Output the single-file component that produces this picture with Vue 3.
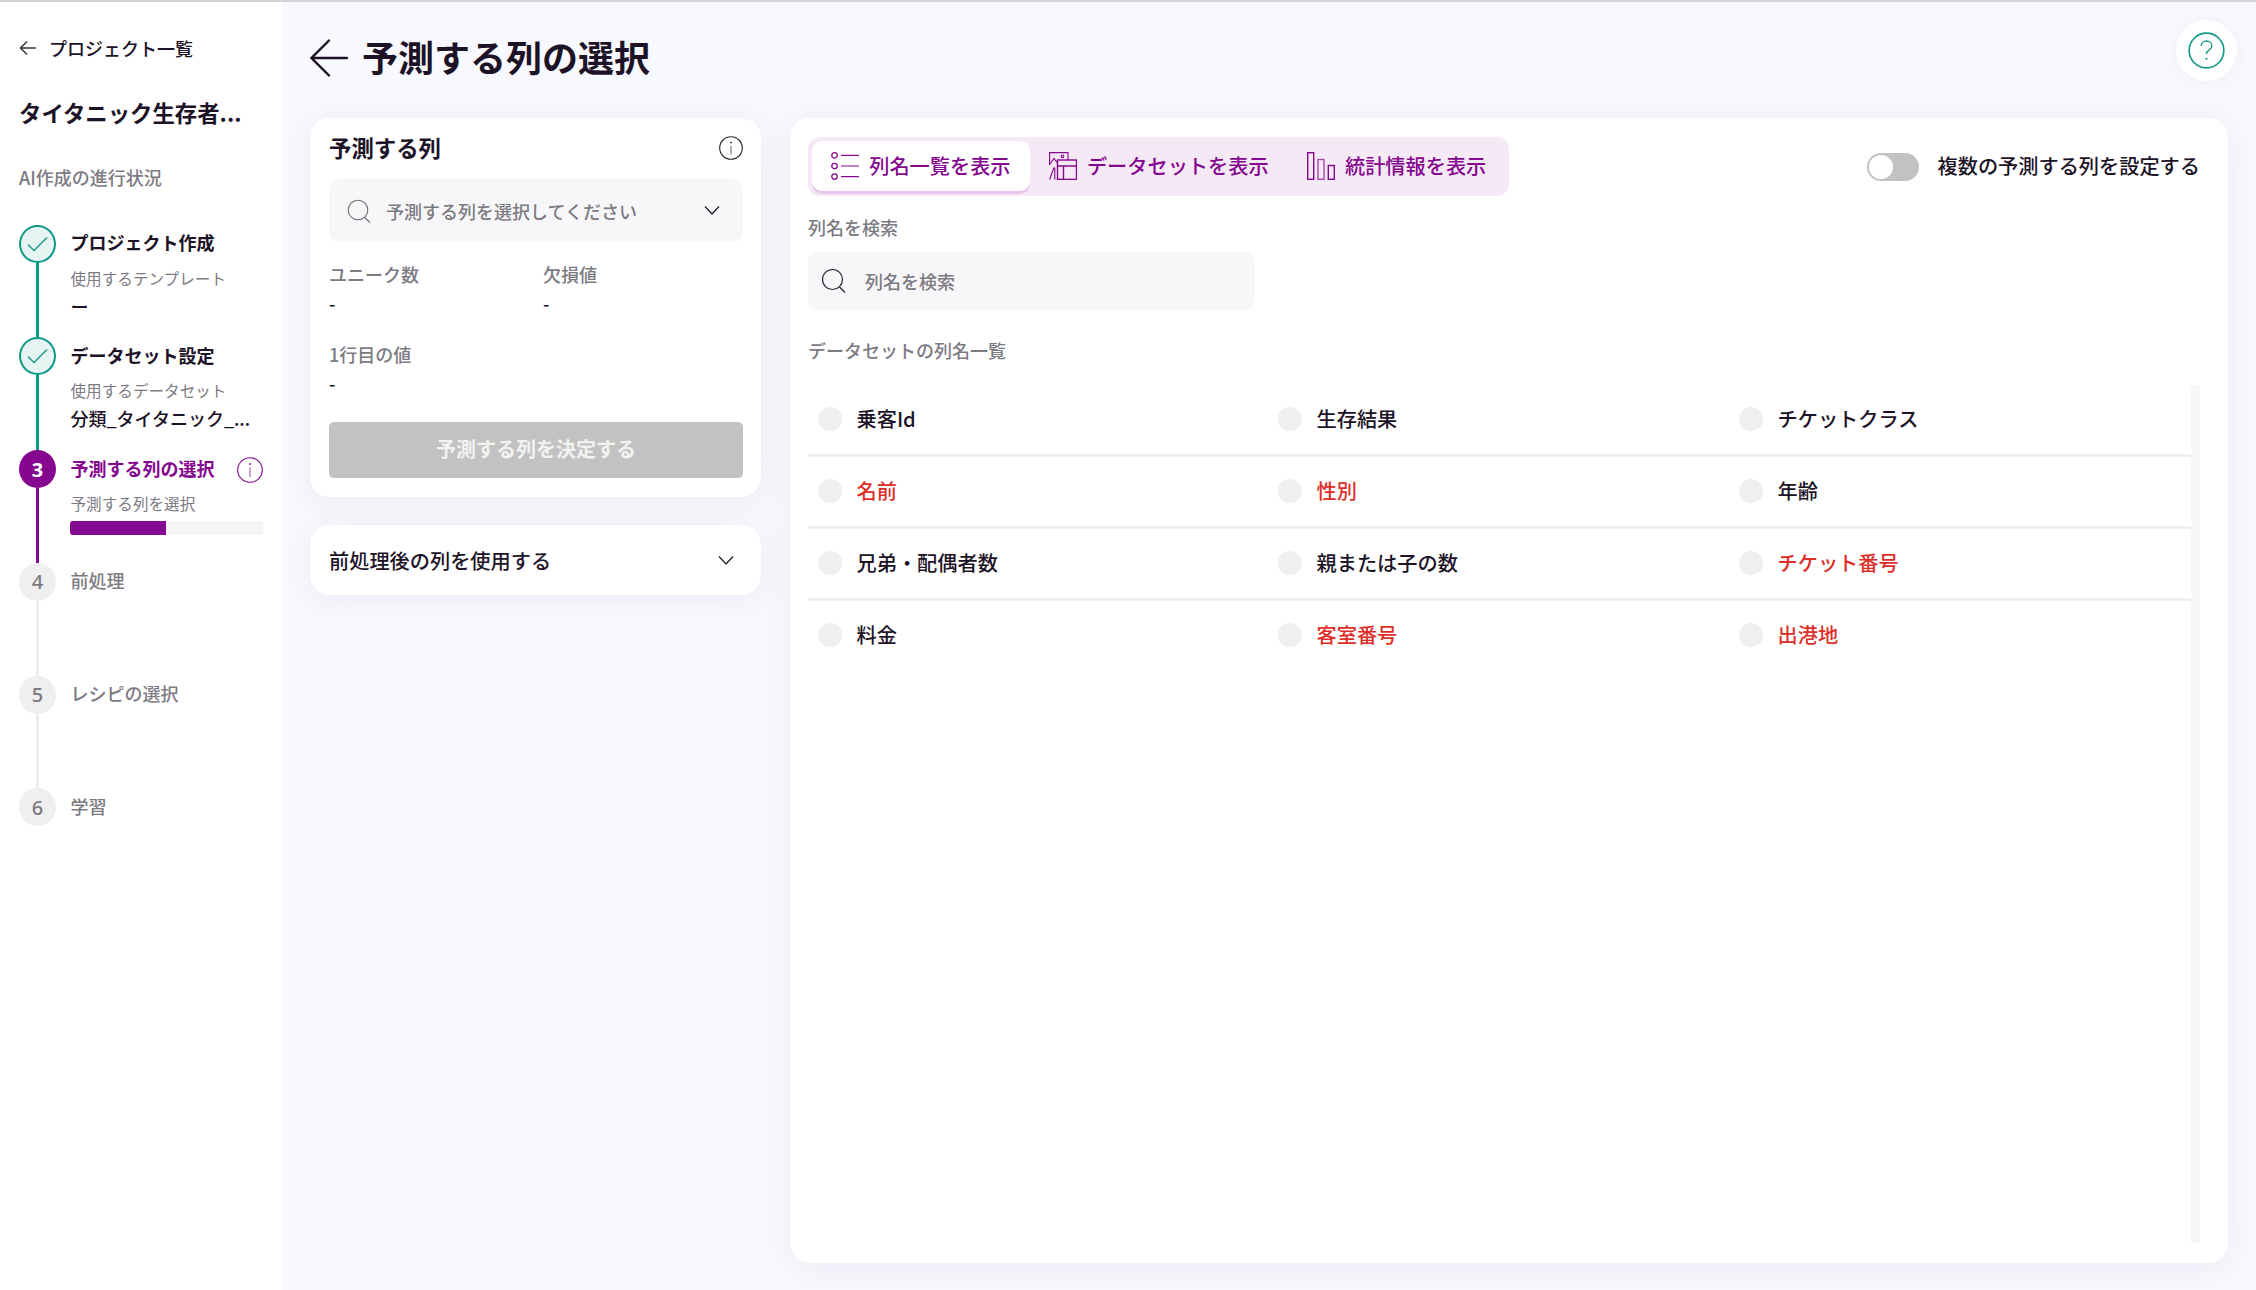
<script setup>
const steps = [
  { no: 1, state: 'done', name: 'プロジェクト作成', sub: '使用するテンプレート', value: 'ー' },
  { no: 2, state: 'done', name: 'データセット設定', sub: '使用するデータセット', value: '分類_タイタニック_...' },
  { no: 3, state: 'active', name: '予測する列の選択', sub: '予測する列を選択', progress: 49.5 },
  { no: 4, state: 'todo', name: '前処理' },
  { no: 5, state: 'todo', name: 'レシピの選択' },
  { no: 6, state: 'todo', name: '学習', last: true },
]
const columns = [
  { name: '乗客Id' }, { name: '生存結果' }, { name: 'チケットクラス' },
  { name: '名前', warn: true }, { name: '性別', warn: true }, { name: '年齢' },
  { name: '兄弟・配偶者数' }, { name: '親または子の数' }, { name: 'チケット番号', warn: true },
  { name: '料金' }, { name: '客室番号', warn: true }, { name: '出港地', warn: true },
]
</script>

<template>
  <div class="page">
    <aside class="sidebar">
      <div class="back-link">
        <svg width="18" height="16" viewBox="0 0 18 16" fill="none" stroke="#3a3340" stroke-width="1.5"><path d="M17 8H2M8 1.5 1.5 8 8 14.5" /></svg>
        <span>プロジェクト一覧</span>
      </div>
      <div class="project-name">タイタニック生存者...</div>
      <div class="progress-title">AI作成の進行状況</div>
      <ol class="steps">
        <li v-for="s in steps" :key="s.no" class="step" :class="s.state">
          <div class="rail">
            <div class="dot">
              <svg v-if="s.state === 'done'" width="21" height="16" viewBox="0 0 21 16" fill="none" stroke="#0f9a87" stroke-width="1.3"><path d="M1 8.5 7 14.5 20 1.500" /></svg>
              <span v-else>{{ s.no }}</span>
            </div>
            <div v-if="!s.last" class="line"></div>
          </div>
          <div class="step-body">
            <div class="step-head">
              <span class="step-name">{{ s.name }}</span>
              <svg v-if="s.state === 'active'" class="step-info" width="26" height="26" viewBox="0 0 26 26" fill="none" stroke="#85068f"><circle cx="13" cy="13" r="12.3" stroke-width="1.1" /><path d="M13 10.5V20" stroke-width="1.3" opacity=".6" /><circle cx="13" cy="7" r=".9" fill="#85068f" stroke="none" /></svg>
            </div>
            <div v-if="s.sub" class="step-sub">{{ s.sub }}</div>
            <div v-if="s.value" class="step-value">{{ s.value }}</div>
            <div v-if="s.progress" class="bar"><div class="bar-fill" :style="{ width: s.progress + '%' }"></div></div>
          </div>
        </li>
      </ol>
    </aside>

    <main class="main">
      <header class="header">
        <div class="header-left">
          <svg width="38" height="38" viewBox="0 0 38 38" fill="none" stroke="#1d1327" stroke-width="2.4" stroke-linecap="round"><path d="M37 19H2M19 1.500 1.500 19 19 36.500" /></svg>
          <h1>予測する列の選択</h1>
        </div>
        <button class="help">
          <svg width="37" height="37" viewBox="0 0 38 38" fill="none" stroke="#0f9a87"><circle cx="19" cy="19" r="17.8" stroke-width="1.7" /><path d="M13.500 14.500c0-3.200 2.400-5.200 5.500-5.200s5.500 2 5.500 5c0 4.400-5.500 3.800-5.500 8.400" stroke-width="1.4" /><circle cx="19" cy="27.500" r="1.100" fill="#0f9a87" stroke="none" /></svg>
        </button>
      </header>

      <div class="content">
        <div class="left-col">
          <section class="card target">
            <div class="card-head">
              <h2>予測する列</h2>
              <svg width="24" height="24" viewBox="0 0 24 24" fill="none" stroke="#2b2430"><circle cx="12" cy="12" r="11.3" stroke-width="1.1" /><path d="M12 10v8.500" stroke-width="1.2" opacity=".6" /><circle cx="12" cy="6.600" r=".9" fill="#2b2430" stroke="none" /></svg>
            </div>
            <div class="select">
              <svg width="24" height="24" viewBox="0 0 24 24" fill="none" stroke="#6e6b73" stroke-width="1.1"><circle cx="11" cy="11" r="9.800" /><path d="M17.800 18.500 23 23.500" /></svg>
              <span class="placeholder">予測する列を選択してください</span>
              <svg class="chev-sm" width="16" height="11" viewBox="0 0 16 11" fill="none" stroke="#2b2430" stroke-width="1.4"><path d="M1 1.500 8 9l7-7.500" /></svg>
            </div>
            <div class="stats">
              <div class="stat"><div class="stat-label">ユニーク数</div><div class="stat-value">-</div></div>
              <div class="stat"><div class="stat-label">欠損値</div><div class="stat-value">-</div></div>
            </div>
            <div class="stat first-row"><div class="stat-label">1行目の値</div><div class="stat-value">-</div></div>
            <button class="decide">予測する列を決定する</button>
          </section>
          <section class="card accordion">
            <span>前処理後の列を使用する</span>
            <svg width="16" height="11" viewBox="0 0 16 11" fill="none" stroke="#2b2430" stroke-width="1.4"><path d="M1 1.500 8 9l7-7.500" /></svg>
          </section>
        </div>

        <section class="card right">
          <div class="toolbar">
            <div class="tabs">
              <div class="tab on">
                <svg width="28" height="28" viewBox="0 0 28 28" fill="none" stroke="#85068f" stroke-width="1.300"><circle cx="3.500" cy="3.400" r="2.700" /><circle cx="3.500" cy="14" r="2.700" /><circle cx="3.500" cy="24.600" r="2.700" /><path d="M10 3.400h18M10 24.600h18" /><path d="M10 14h18" stroke-width="2" opacity=".5" /></svg>
                <span class="tab-text">列名一覧を表示</span>
              </div>
              <div class="tab">
                <svg width="28" height="28" viewBox="0 0 28 28" fill="none" stroke="#85068f" stroke-width="1.100"><path d="M.6 13V.6h18.400V8" /><path d="M.6 12.500 5 6.500l3.500 4.500" /><circle cx="13.500" cy="4.300" r="1.300" /><path d="M.6 27.500 5 15.500M5.800 15.500v12" /><rect x="8.500" y="8" width="19" height="19.400" stroke-width="1.400" /><path d="M8.500 14h19M14.500 14v13.400" stroke-width="1.400" /></svg>
                <span class="tab-text">データセットを表示</span>
              </div>
              <div class="tab">
                <svg width="28" height="28" viewBox="0 0 28 28" fill="none" stroke="#85068f" stroke-width="1.400"><rect x=".7" y=".7" width="6" height="26.600" /><rect x="11" y="7.500" width="6" height="19.800" opacity=".7" /><rect x="21.300" y="13.500" width="6" height="13.800" /></svg>
                <span class="tab-text">統計情報を表示</span>
              </div>
            </div>
            <div class="toggle-wrap">
              <span class="toggle"><span class="knob"></span></span>
              <span class="tab-text">複数の予測する列を設定する</span>
            </div>
          </div>

          <div class="field-label">列名を検索</div>
          <div class="search">
            <svg width="26" height="26" viewBox="0 0 26 26" fill="none" stroke="#2b2430" stroke-width="1.200"><circle cx="11.500" cy="11.500" r="10" /><path d="M18.500 19 24 24.500" /></svg>
            <span class="placeholder search-text">列名を検索</span>
          </div>
          <div class="list-label">データセットの列名一覧</div>

          <div class="list-wrap">
            <div class="grid">
              <div v-for="c in columns" :key="c.name" class="cell" :class="{ warn: c.warn }">
                <span class="radio"></span>
                <span>{{ c.name }}</span>
              </div>
            </div>
            <div class="scroll"></div>
          </div>
        </section>
      </div>
    </main>
  </div>
</template>

<style>
html, body { margin: 0; padding: 0; background: #f8f9fe; }
</style>

<style scoped>
* { box-sizing: border-box; }
.page {
  display: flex;
  width: 2256px;
  height: 1290px;
  overflow: hidden;
  border-top: 2px solid #d2d3d6;
  background: #f8f9fe;
  color: #1d1327;
  font-family: "Noto Sans CJK JP", "Noto Sans", sans-serif;
  font-size: 20.2px;
}
.sidebar {
  width: 282px;
  flex: none;
  background: #fff;
  padding: 33px 19px 0;
}
.back-link {
  display: flex;
  align-items: center;
  gap: 12px;
  height: 26px;
  font-size: 18px;
  font-weight: 500;
}
.project-name {
  margin-top: 33px;
  height: 36px;
  line-height: 36px;
  font-size: 22.400px;
  font-weight: 700;
  white-space: nowrap;
}
.progress-title {
  margin-top: 34px;
  height: 26px;
  line-height: 26px;
  font-size: 18px;
  font-weight: 500;
  color: #7c7a82;
}
.steps {
  list-style: none;
  margin: 34.500px 0 0;
  padding: 0;
}
.step {
  display: flex;
  height: 112.800px;
}
.rail {
  width: 37px;
  flex: none;
  display: flex;
  flex-direction: column;
  align-items: center;
}
.dot {
  width: 37px;
  height: 38px;
  flex: none;
  border-radius: 50%;
  display: flex;
  align-items: center;
  justify-content: center;
  background: #efefef;
  color: #7c7a82;
  font-size: 20px;
  font-weight: 500;
  font-family: "Noto Sans", sans-serif;
}
.line {
  width: 3px;
  flex: 1;
  background: #ededed;
}
.step.done .dot {
  background: #e7f5f2;
  border: 2.500px solid #0f9a87;
}
.step.done .line { background: #0f9a87; }
.step.active .dot {
  background: #85068f;
  color: #fff;
  font-weight: 700;
}
.step.active .line { background: #85068f; }
.step-body {
  margin-left: 14.500px;
  flex: 1;
  min-width: 0;
}
.step-head {
  display: flex;
  align-items: center;
  justify-content: space-between;
  height: 38px;
}
.step-name {
  font-size: 18px;
  font-weight: 700;
  line-height: 36px;
  margin-top: -3px;
}
.step.todo .step-name {
  font-weight: 500;
  color: #7c7a82;
}
.step.active .step-name { color: #85068f; }
.step-info { margin-top: 1px; }
.step-sub {
  margin-top: 3px;
  height: 24px;
  line-height: 24px;
  font-size: 15.600px;
  color: #7c7a82;
}
.step-value {
  margin-top: 3px;
  height: 26px;
  line-height: 26px;
  font-size: 18px;
  font-weight: 500;
  white-space: nowrap;
}
.bar {
  margin-top: 6px;
  margin-left: -.5px;
  height: 14px;
  border-radius: 3px;
  background: #f5f5f7;
  overflow: hidden;
}
.bar-fill {
  height: 100%;
  background: #85068f;
}
.main {
  flex: 1;
  min-width: 0;
  padding: 0 28px 0 28px;
}
.header {
  height: 116px;
  display: flex;
  align-items: flex-start;
  justify-content: space-between;
}
.header-left {
  display: flex;
  align-items: center;
  gap: 14px;
  height: 38px;
  margin-top: 37px;
}
h1 {
  margin: 0 0 5px;
  font-size: 36px;
  font-weight: 700;
  line-height: 38px;
  white-space: nowrap;
}
.help {
  width: 61px;
  height: 61px;
  margin: 18px -9px 0 0;
  padding: 0;
  border: 0;
  border-radius: 50%;
  background: #fff;
  box-shadow: 0 2px 16px rgba(50, 60, 120, .05);
  display: flex;
  align-items: center;
  justify-content: center;
}
.content {
  display: flex;
  gap: 29px;
  align-items: flex-start;
}
.left-col {
  width: 451px;
  flex: none;
  display: flex;
  flex-direction: column;
  gap: 28px;
}
.card {
  background: #fff;
  border-radius: 20px;
  box-shadow: 0 4px 32px rgba(50, 60, 120, .07);
}
.target {
  height: 379px;
  padding: 16px 18px 0 19px;
}
.card-head {
  display: flex;
  align-items: center;
  justify-content: space-between;
  height: 28px;
}
h2 {
  margin: 0 0 3px;
  font-size: 22.400px;
  font-weight: 700;
  line-height: 28px;
}
.select {
  margin-top: 17px;
  height: 63px;
  border-radius: 10px;
  background: #f7f7f9;
  display: flex;
  align-items: center;
  padding: 0 23px 0 18px;
}
.placeholder {
  color: #7c7a82;
  font-size: 18px;
  font-weight: 500;
  margin-left: 15px;
}
.search-text { margin-left: 18px; }
.chev-sm { margin-left: auto; }
.stats {
  display: flex;
  margin-top: 19px;
}
.stats .stat { width: 214px; flex: none; }
.stat-label {
  height: 26px;
  line-height: 26px;
  font-size: 18px;
  font-weight: 500;
  color: #7c7a82;
}
.stat-value {
  margin-top: 3px;
  height: 26px;
  line-height: 26px;
  font-size: 18px;
  font-weight: 500;
}
.first-row { margin-top: 25px; }
.decide {
  display: block;
  margin: 26px 0 0;
  width: 414px;
  height: 56px;
  padding: 0 0 3px;
  border: 0;
  border-radius: 5px;
  background: #c2c2c2;
  color: #f2f2f2;
  font-family: inherit;
  font-size: 20px;
  font-weight: 700;
}
.accordion {
  height: 70px;
  padding: 0 27px 0 19px;
  display: flex;
  align-items: center;
  justify-content: space-between;
  font-weight: 500;
}
.right {
  width: 1438px;
  flex: none;
  height: 1145px;
  padding: 19px 28px 20px 18px;
}
.toolbar {
  display: flex;
  align-items: center;
  justify-content: space-between;
  height: 59px;
}
.tabs {
  display: flex;
  height: 59px;
  padding: 4px;
  border-radius: 12px;
  background: #f5e9f6;
  color: #85068f;
  font-weight: 500;
}
.tab {
  display: flex;
  align-items: center;
  gap: 10px;
  height: 50px;
  padding: 0 19.200px;
  border-radius: 10px;
  white-space: nowrap;
}
.tab-text { margin-bottom: 2px; }
.tab.on {
  background: #fff;
  box-shadow: 0 3px 0 #e6c9ea;
}
.toggle-wrap {
  display: flex;
  align-items: center;
  gap: 19px;
  font-weight: 500;
}
.toggle {
  display: flex;
  align-items: center;
  width: 52px;
  height: 28px;
  padding: 2px;
  border-radius: 14px;
  background: #c2c2c2;
}
.knob {
  width: 24px;
  height: 24px;
  border-radius: 50%;
  background: #fff;
}
.field-label, .list-label {
  font-size: 18px;
  font-weight: 500;
  color: #7c7a82;
  line-height: 26px;
  height: 26px;
}
.field-label { margin-top: 18px; }
.search {
  margin-top: 12px;
  width: 447px;
  height: 58px;
  border-radius: 10px;
  background: #f7f7f9;
  display: flex;
  align-items: center;
  padding-left: 13px;
}
.list-label { margin-top: 27px; }
.list-wrap {
  margin-top: 22px;
  display: flex;
  height: 858px;
}
.grid {
  width: 1383px;
  flex: none;
  display: grid;
  grid-template-columns: 460px 461px 462px;
  grid-auto-rows: 72px;
  align-content: start;
}
.cell {
  display: flex;
  align-items: center;
  gap: 15px;
  padding: 0 9.500px 3px;
  border-bottom: 3px solid #efefef;
  font-weight: 500;
  white-space: nowrap;
  height: 72px;
}
.cell:nth-last-child(-n + 3) { border-bottom-color: transparent; }
.cell.warn { color: #dd2e28; }
.radio {
  width: 24px;
  height: 24px;
  margin-top: 2px;
  flex: none;
  border-radius: 50%;
  background: #efefef;
}
.scroll {
  width: 9px;
  flex: none;
  background: #f7f7f9;
}
</style>
